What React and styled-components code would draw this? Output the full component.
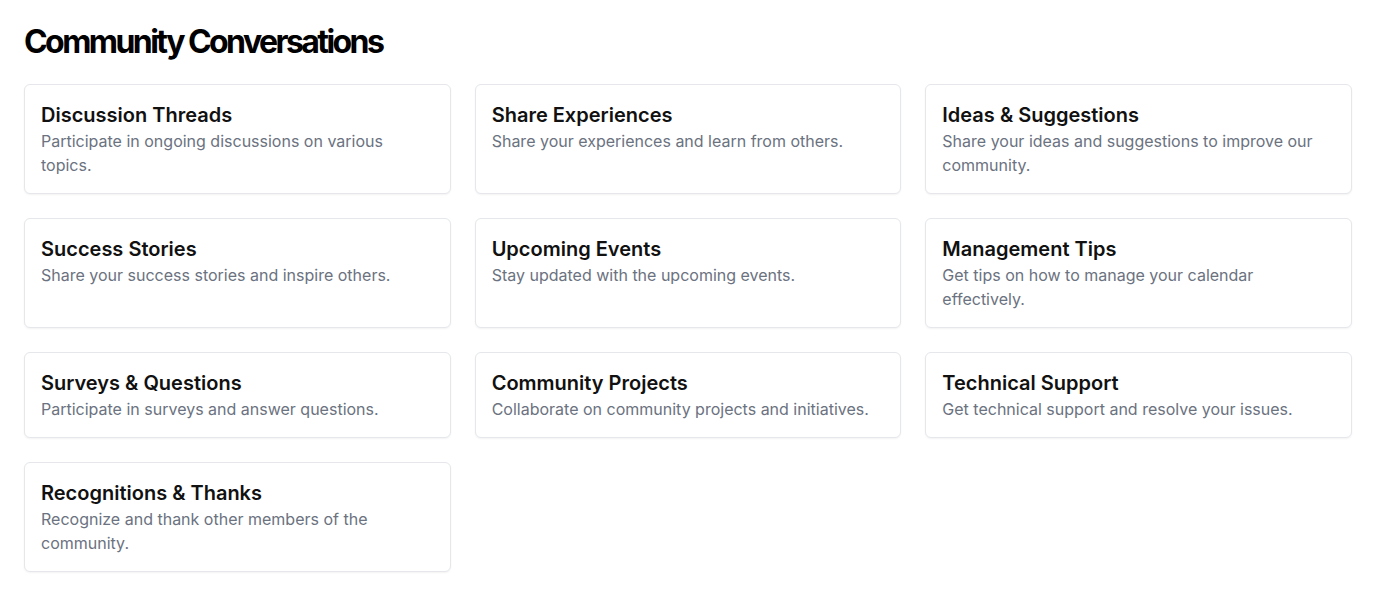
import React from "react";
import styled, { createGlobalStyle } from "styled-components";

const GlobalStyle = createGlobalStyle`
  * { box-sizing: border-box; }
  body {
    margin: 0;
    background: #ffffff;
    font-family: Inter, "Noto Sans", sans-serif;
    color: #111827;
  }
`;

const Page = styled.main`
  padding: 24px;
`;

const Heading = styled.h1`
  margin: 0 0 24px;
  font-size: 32px;
  line-height: 36px;
  font-weight: 700;
  letter-spacing: -0.08em;
  color: #000000;
`;

const Grid = styled.div`
  display: grid;
  grid-template-columns: repeat(3, 1fr);
  gap: 24px;
`;

const Card = styled.div`
  background: #ffffff;
  border: 1px solid #e5e7eb;
  border-radius: 6px;
  box-shadow: 0 1px 2px rgba(0, 0, 0, 0.05);
  padding: 16px;
`;

const CardTitle = styled.h2`
  margin: 0;
  font-size: 20px;
  line-height: 28px;
  font-weight: 600;
  color: #111111;
`;

const CardText = styled.p`
  margin: 0;
  font-size: 16px;
  line-height: 24px;
  color: #6b7280;
`;

const topics = [
  ["Discussion Threads", "Participate in ongoing discussions on various topics."],
  ["Share Experiences", "Share your experiences and learn from others."],
  ["Ideas & Suggestions", "Share your ideas and suggestions to improve our community."],
  ["Success Stories", "Share your success stories and inspire others."],
  ["Upcoming Events", "Stay updated with the upcoming events."],
  ["Management Tips", "Get tips on how to manage your calendar effectively."],
  ["Surveys & Questions", "Participate in surveys and answer questions."],
  ["Community Projects", "Collaborate on community projects and initiatives."],
  ["Technical Support", "Get technical support and resolve your issues."],
  ["Recognitions & Thanks", "Recognize and thank other members of the community."],
];

export default function App() {
  return (
    <Page>
      <GlobalStyle />
      <Heading>Community Conversations</Heading>
      <Grid>
        {topics.map(([title, text]) => (
          <Card key={title}>
            <CardTitle>{title}</CardTitle>
            <CardText>{text}</CardText>
          </Card>
        ))}
      </Grid>
    </Page>
  );
}
